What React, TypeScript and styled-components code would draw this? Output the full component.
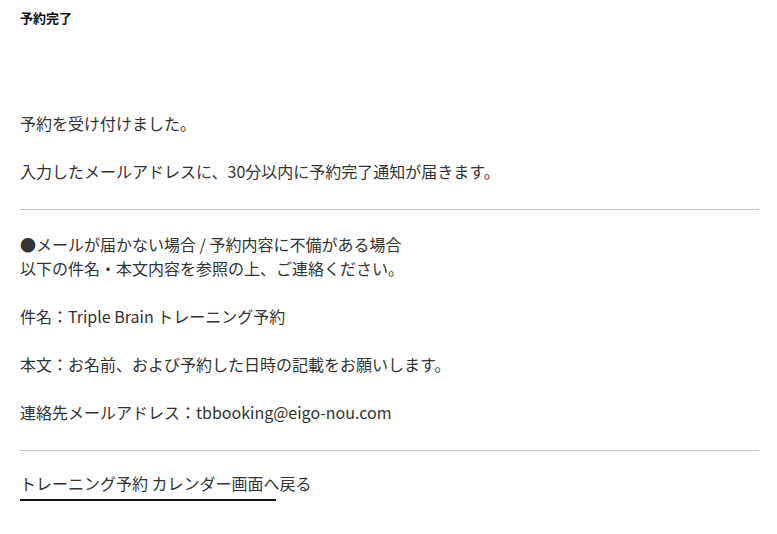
import React from 'react'
import styled, { createGlobalStyle } from 'styled-components'

const GlobalStyle = createGlobalStyle`
  html, body {
    margin: 0;
    padding: 0;
    background: #fff;
  }
  body {
    font-family: "Noto Sans CJK JP", "Noto Sans", sans-serif;
    color: #333;
  }
`

const Page = styled.main`
  padding: 8px 18px 0 20px;
`

const Title = styled.h1`
  margin: 0;
  font-size: 13px;
  line-height: 20px;
  font-weight: bold;
  color: #111;
`

const Section = styled.section`
  font-size: 16px;
  line-height: 24px;
`

const Message = styled(Section)`
  margin-top: 83px;
`

const Paragraph = styled.p`
  margin: 0;
  & + & {
    margin-top: 24px;
  }
`

const Divider = styled.hr<{ $top: number; $bottom: number }>`
  border: none;
  border-top: 1px solid #c4c4c4;
  margin: ${({ $top }) => $top}px 0 ${({ $bottom }) => $bottom}px;
`

const BackLink = styled.a`
  position: relative;
  display: inline-block;
  font-size: 16px;
  line-height: 24px;
  color: #333;
  text-decoration: none;
  padding-bottom: 6px;
  &:after {
    content: '';
    position: absolute;
    left: 0;
    bottom: 0;
    width: 256px;
    height: 2px;
    background: #111;
  }
`

export default function App() {
  return (
    <>
      <GlobalStyle />
      <Page>
        <Title>予約完了</Title>

        <Message>
          <Paragraph>予約を受け付けました。</Paragraph>
          <Paragraph>入力したメールアドレスに、30分以内に予約完了通知が届きます。</Paragraph>
        </Message>

        <Divider $top={26} $bottom={22} />

        <Section>
          <Paragraph>
            ●メールが届かない場合 / 予約内容に不備がある場合
            <br />
            以下の件名・本文内容を参照の上、ご連絡ください。
          </Paragraph>
          <Paragraph>件名：Triple Brain トレーニング予約</Paragraph>
          <Paragraph>本文：お名前、および予約した日時の記載をお願いします。</Paragraph>
          <Paragraph>連絡先メールアドレス：tbbooking@eigo-nou.com</Paragraph>
        </Section>

        <Divider $top={26} $bottom={20} />

        <BackLink href="#">トレーニング予約 カレンダー画面へ戻る</BackLink>
      </Page>
    </>
  )
}
